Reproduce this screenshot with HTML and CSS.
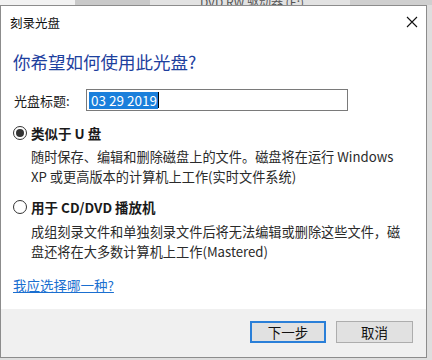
FILE: index.html
```
<!DOCTYPE html>
<html lang="zh-CN">
<head>
<meta charset="utf-8">
<title>刻录光盘</title>
<link rel="stylesheet" href="styles.css">
</head>
<body>
<div class="strip"><span class="strip-text">DVD RW 驱动器 (E:)</span></div>
<div class="window">
  <div class="titlebar">
    <span class="title">刻录光盘</span>
    <svg class="close" width="12" height="12" viewBox="0 0 12 12"><path d="M1 1L11 11M11 1L1 11" stroke="#111" stroke-width="1.1" fill="none"/></svg>
  </div>
  <div class="content">
    <h1 class="heading">你希望如何使用此光盘?</h1>
    <div class="field">
      <span class="field-label">光盘标题:</span>
      <div class="input"><span class="sel">03 29 2019</span><span class="caret"></span></div>
    </div>
    <div class="option">
      <div class="radio-row"><span class="radio checked"></span><span class="opt-label">类似于 U 盘</span></div>
      <p class="desc">随时保存、编辑和删除磁盘上的文件。磁盘将在运行 Windows<br>XP 或更高版本的计算机上工作(实时文件系统)</p>
    </div>
    <div class="option second">
      <div class="radio-row"><span class="radio"></span><span class="opt-label">用于 CD/DVD 播放机</span></div>
      <p class="desc">成组刻录文件和单独刻录文件后将无法编辑或删除这些文件，磁<br>盘还将在大多数计算机上工作(Mastered)</p>
    </div>
    <a class="link" href="#">我应选择哪一种?</a>
  </div>
  <div class="footer">
    <button class="btn primary">下一步</button>
    <button class="btn">取消</button>
  </div>
</div>
</body>
</html>
```
FILE: styles.css
```
* { box-sizing: border-box; }
html, body { margin: 0; padding: 0; }
body {
  width: 432px;
  height: 360px;
  overflow: hidden;
  background: #dedede;
  font-family: "Noto Sans CJK SC", "Noto Sans", sans-serif;
  color: #1a1a1a;
}
.strip {
  height: 5px;
  overflow: hidden;
  display: flex;
  align-items: flex-end;
  padding-left: 200px;
  background: linear-gradient(to right, #f2f2f2 0, #f2f2f2 75px, #c9c9c9 75px, #c9c9c9 150px, #e2e2e2 150px, #e2e2e2 350px, #cfcfcf 350px);
}
.strip-text { font-size: 12px; line-height: 12px; color: #555; margin-bottom: -3px; }
.window {
  width: 427px;
  height: 353px;
  margin-left: 0;
  border: 1px solid #8c8c8c;
  background: #fff;
  display: flex;
  flex-direction: column;
}
.titlebar {
  height: 32px;
  display: flex;
  align-items: center;
  justify-content: space-between;
  padding: 0 8px 0 9px;
  flex: none;
}
.title { font-size: 12.5px; color: #111; }
.content {
  flex: 1;
  padding: 0 12px;
}
.heading {
  margin: 12px 0 0 0;
  font-size: 17.5px;
  line-height: 24px;
  font-weight: normal;
  color: #1d409e;
}
.field {
  display: flex;
  align-items: center;
  margin-top: 15px;
  height: 22px;
}
.field-label { font-size: 13px; width: 73px; padding-left: 1px; }
.input {
  width: 262px;
  height: 22px;
  border: 1px solid #7a7a7a;
  display: flex;
  align-items: center;
  padding-left: 2px;
}
.sel {
  background: #1a7fdb;
  color: #fff;
  font-size: 13.5px;
  line-height: 17px;
  height: 17px;
  padding: 0 1px 0 2px;
}
.caret { width: 1px; height: 16px; background: #000; }
.option { margin-top: 12px; }
.option.second { margin-top: 10px; }
.radio-row {
  display: flex;
  align-items: center;
  height: 20px;
}
.radio {
  width: 14px;
  height: 14px;
  border-radius: 50%;
  border: 1px solid #333;
  margin-right: 4px;
  display: flex;
  align-items: center;
  justify-content: center;
  flex: none;
}
.radio.checked::after {
  content: "";
  width: 8px;
  height: 8px;
  border-radius: 50%;
  background: #333;
}
.opt-label { font-size: 13.5px; font-weight: bold; }
.desc {
  margin: 4px 0 0 18px;
  font-size: 13.2px;
  line-height: 20px;
  color: #2a2a2a;
  white-space: nowrap;
}
.option.second .desc { margin-top: 5px; }
.link {
  display: block;
  margin-top: 13px;
  font-size: 13.5px;
  line-height: 20px;
  color: #1a6fd0;
  text-decoration: underline;
  width: max-content;
}
.footer {
  flex: none;
  height: 48px;
  background: #f0f0f0;
  display: flex;
  justify-content: flex-end;
  align-items: flex-start;
  padding: 12px 13px 0 0;
  gap: 10px;
}
.btn {
  width: 77px;
  height: 22px;
  border: 1px solid #adadad;
  background: #e1e1e1;
  font-family: "Noto Sans CJK SC", sans-serif;
  font-size: 13.5px;
  line-height: 18px;
  color: #111;
  padding: 0;
}
.btn.primary {
  border: 2px solid #2a7fd8;
  width: 76px;
}
```
